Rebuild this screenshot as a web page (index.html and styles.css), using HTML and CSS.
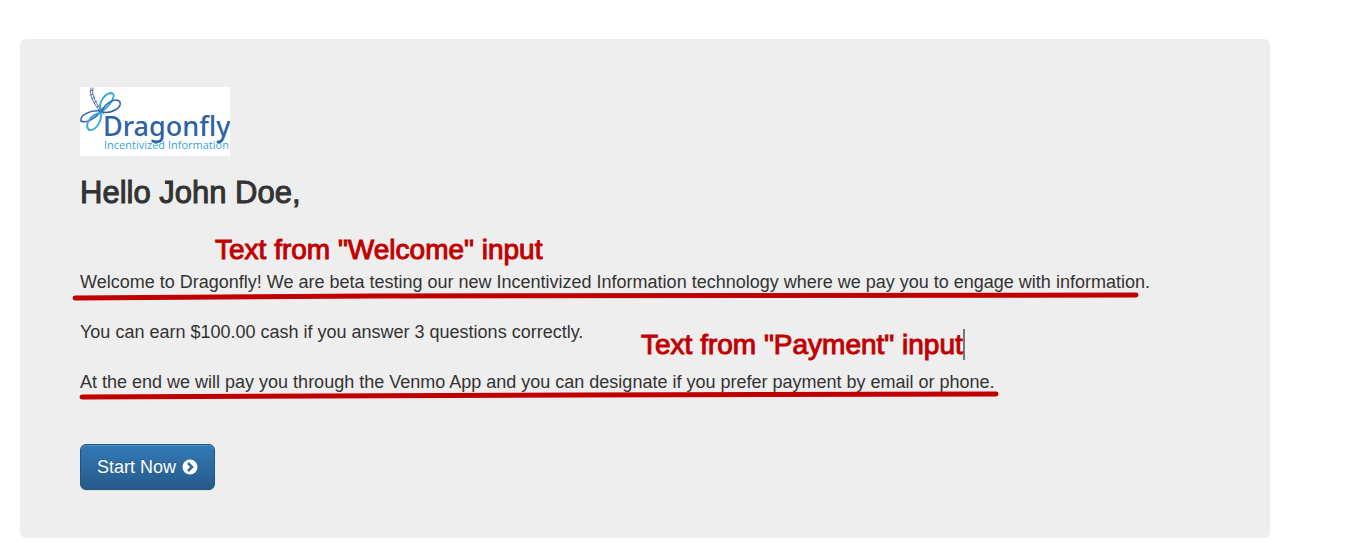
FILE: index.html
```html
<!DOCTYPE html>
<html lang="en">
<head>
<meta charset="utf-8">
<title>Dragonfly</title>
<link rel="stylesheet" href="styles.css">
</head>
<body>
<main class="jumbotron">
  <svg class="logo" viewBox="0 0 150 69" role="img" aria-label="Dragonfly Incentivized Information">
    <rect width="150" height="69" fill="#fff"/>
    <g fill="none" stroke-linecap="round">
      <path d="M11 1C9 8 13 16 22 27M13 1C11 8 16 17 24 27" stroke="#5b76a5" stroke-width="1"/>
      <path d="M10 4L13 3M10 8L13 7M12 12L15 10M14 16L17 14M17 20L20 18M19 23L22 21" stroke="#5b76a5" stroke-width="1"/>
      <path d="M21 23C18 15 25 6 32 6C37 8 30 19 21 25" stroke="#35a4dc" stroke-width="1.8"/>
      <path d="M22 24C25 16 36 10 40 15C42 21 31 27 22 25" stroke="#2c62a6" stroke-width="1.5"/>
      <path d="M20 24C10 23 0 28 1 34C6 37 16 31 20 25" stroke="#2c62a6" stroke-width="1.5"/>
      <path d="M20 26C10 28 4 38 9 43C16 44 22 34 21 26" stroke="#35a4dc" stroke-width="1.8"/>
    </g>
    <text class="logo-name" x="23" y="49">Dragonfly</text>
    <text class="logo-tag" x="24" y="62">Incentivized Information</text>
  </svg>
  <h1 class="greeting">Hello John Doe,</h1>
  <p class="message">
    Welcome to Dragonfly! We are beta testing our new Incentivized Information technology where we pay you to engage with information.
    <span class="note note-welcome">Text from "Welcome" input</span>
    <svg class="underline underline-welcome" viewBox="0 0 1068 10"><path d="M3 7L300 5L1064 4"/></svg>
  </p>
  <p class="message">You can earn $100.00 cash if you answer 3 questions correctly.</p>
  <p class="message">
    At the end we will pay you through the Venmo App and you can designate if you prefer payment by email or phone.
    <span class="note note-payment">Text from "Payment" input</span>
    <svg class="underline underline-payment" viewBox="0 0 920 10"><path d="M3 7L500 5L917 4"/></svg>
  </p>
  <button class="start" type="button">Start Now
    <svg class="chevron" viewBox="0 0 16 16" aria-hidden="true"><circle cx="8" cy="8" r="7.5" fill="#fff"/><path d="M6 4L10 8L6 12" fill="none" stroke="#2f6ca3" stroke-width="2.6"/></svg>
  </button>
</main>
</body>
</html>
```
FILE: styles.css
```css
* { box-sizing: border-box; }
body {
  margin: 0;
  padding: 39px 77px 12px 20px;
  background: #fff;
  color: #333;
  font-family: "Liberation Sans", Arial, sans-serif;
}
.jumbotron {
  padding: 48px 60px;
  background: #eee;
  border-radius: 6px;
}
.logo { display: block; width: 150px; height: 69px; }
.logo-name { font: 500 27px "Noto Sans", sans-serif; fill: #2c62a6; }
.logo-tag { font: 500 11px "Open Sans", sans-serif; fill: #35a4dc; }
.greeting {
  margin: 20px 0 61px;
  font-size: 31px;
  line-height: 33px;
  font-weight: 400;
  -webkit-text-stroke: 1px #333;
}
.message {
  position: relative;
  margin: 0 0 25px;
  font-size: 18px;
  line-height: 25px;
}
.note {
  position: absolute;
  color: #c00000;
  font-size: 28px;
  line-height: 31px;
  white-space: nowrap;
  -webkit-text-stroke: 1px #c00000;
}
.note-welcome { left: 135px; top: -36px; }
.note-payment { left: 561px; top: -41px; border-right: 2px solid #777; }
.underline { position: absolute; height: 10px; fill: none; stroke: #c00000; stroke-width: 5px; stroke-linecap: round; }
.underline-welcome { left: -8px; top: 21px; width: 1068px; }
.underline-payment { left: -1px; top: 20px; width: 920px; }
.start {
  display: flex;
  align-items: center;
  gap: 6px;
  margin-top: 49px;
  padding: 10px 16px;
  border: 1px solid #245580;
  border-radius: 6px;
  background: linear-gradient(#337ab7, #265a88);
  box-shadow: inset 0 1px 0 rgba(255, 255, 255, 0.15), 0 1px 1px rgba(0, 0, 0, 0.075);
  color: #fff;
  font-family: inherit;
  font-size: 18px;
  line-height: 24px;
  text-shadow: 0 -1px 0 rgba(0, 0, 0, 0.2);
}
.chevron { width: 16px; height: 16px; }
```
